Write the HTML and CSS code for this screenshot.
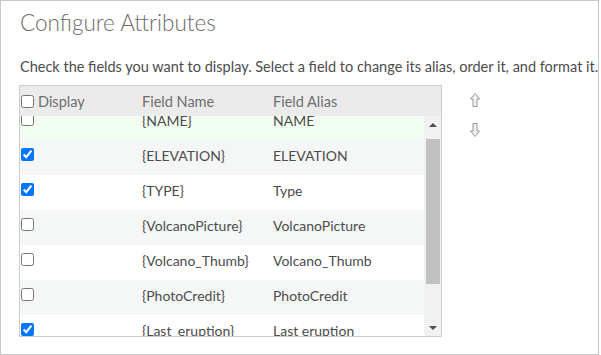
FILE: index.html
```html
<!DOCTYPE html>
<html lang="en">
<head>
    <meta charset="UTF-8">
    <title>Configure Attributes</title>
    <link rel="stylesheet" href="styles.css">
</head>
<body>
    <div class="panel">
        <h1 class="title">Configure Attributes</h1>
        <p class="hint">Check the fields you want to display. Select a field to change its alias, order it, and format it.</p>

        <div class="editor">
            <!-- field grid -->
            <div class="grid">
                <div class="grid-head">
                    <div class="cell cell-check"><input type="checkbox"><span>Display</span></div>
                    <div class="cell">Field Name</div>
                    <div class="cell">Field Alias</div>
                </div>
                <div class="grid-body">
                    <div class="viewport">
                        <div class="rows">
                            <div class="row selected">
                                <div class="cell cell-check"><input type="checkbox"></div>
                                <div class="cell">{NAME}</div>
                                <div class="cell">NAME</div>
                            </div>
                            <div class="row odd">
                                <div class="cell cell-check"><input type="checkbox" checked></div>
                                <div class="cell">{ELEVATION}</div>
                                <div class="cell">ELEVATION</div>
                            </div>
                            <div class="row">
                                <div class="cell cell-check"><input type="checkbox" checked></div>
                                <div class="cell">{TYPE}</div>
                                <div class="cell">Type</div>
                            </div>
                            <div class="row odd">
                                <div class="cell cell-check"><input type="checkbox"></div>
                                <div class="cell">{VolcanoPicture}</div>
                                <div class="cell">VolcanoPicture</div>
                            </div>
                            <div class="row">
                                <div class="cell cell-check"><input type="checkbox"></div>
                                <div class="cell">{Volcano_Thumb}</div>
                                <div class="cell">Volcano_Thumb</div>
                            </div>
                            <div class="row odd">
                                <div class="cell cell-check"><input type="checkbox"></div>
                                <div class="cell">{PhotoCredit}</div>
                                <div class="cell">PhotoCredit</div>
                            </div>
                            <div class="row">
                                <div class="cell cell-check"><input type="checkbox" checked></div>
                                <div class="cell">{Last_eruption}</div>
                                <div class="cell">Last eruption</div>
                            </div>
                        </div>
                    </div>
                    <!-- scrollbar -->
                    <div class="scrollbar">
                        <div class="scroll-btn"><span class="tri tri-up"></span></div>
                        <div class="scroll-track"><div class="scroll-thumb"></div></div>
                        <div class="scroll-btn"><span class="tri tri-down"></span></div>
                    </div>
                </div>
            </div>

            <!-- move up / down -->
            <div class="order-tools">
                <svg class="order-btn" width="10" height="14" viewBox="0 0 10 14"><path d="M5 0.5 L9.5 6 H7 V13.5 H3 V6 H0.5 Z" fill="#f2f2f2" stroke="#959595" stroke-width="1"/></svg>
                <svg class="order-btn" width="10" height="14" viewBox="0 0 10 14"><path d="M5 13.5 L9.5 8 H7 V0.5 H3 V8 H0.5 Z" fill="#f2f2f2" stroke="#959595" stroke-width="1"/></svg>
            </div>
        </div>
    </div>
</body>
</html>
```

FILE: styles.css
```css
/* page */
body {
    margin: 0;
    font-family: Lato, "Open Sans", sans-serif;
    background-color: #fff;
}

.panel {
    width: 599px;
    height: 355px;
    box-sizing: border-box;
    border: 1px solid #c8c8c8;
    padding: 7px 0 0 18px;
    overflow: hidden;
}

.title {
    margin: 0 0 20px 1px;
    font-size: 22.5px;
    line-height: 30px;
    font-weight: 300;
    color: #6b6b6b;
}

.hint {
    margin: 0 0 9px 1px;
    font-size: 14.5px;
    line-height: 18px;
    color: #4c4c4c;
    white-space: nowrap;
}

.editor {
    display: flex;
    align-items: flex-start;
}

/* grid */
.grid {
    width: 423px;
    box-sizing: border-box;
    border: 1px solid #cccccc;
}

.grid-head,
.row {
    display: grid;
    grid-template-columns: 122px 131px 1fr;
}

.grid-head {
    height: 30px;
    align-items: center;
    background-color: #ebebeb;
    color: #6e6e6e;
    font-size: 14.5px;
}

.cell {
    white-space: nowrap;
}

.cell-check {
    display: flex;
    align-items: center;
    padding-left: 1px;
}

.cell-check input {
    margin: 0 4px 0 0;
    width: 13px;
    height: 13px;
}

.grid-body {
    display: flex;
    height: 220px;
}

.viewport {
    flex: 1;
    overflow: hidden;
}

.rows {
    margin-top: -11px;
}

.row {
    height: 35px;
    box-sizing: border-box;
    padding-top: 7px;
    align-items: start;
    font-size: 14px;
    line-height: 18px;
    color: #4c4c4c;
}

.row .cell-check {
    align-items: flex-start;
    padding-top: 1px;
}

.row.odd {
    background-color: #f5f7f7;
}

.row.selected {
    background-color: #f2fdf2;
}

/* scrollbar */
.scrollbar {
    width: 17px;
    display: flex;
    flex-direction: column;
    background-color: #f1f1f1;
}

.scroll-btn {
    height: 17px;
    display: flex;
    align-items: center;
    justify-content: center;
}

.scroll-track {
    flex: 1;
    padding-top: 6px;
}

.scroll-thumb {
    height: 145px;
    margin: 0 1px 0 2px;
    background-color: #c1c1c1;
}

.tri {
    width: 0;
    height: 0;
    border-left: 4px solid transparent;
    border-right: 4px solid transparent;
}

.tri-up {
    border-bottom: 4px solid #505050;
}

.tri-down {
    border-top: 4px solid #505050;
}

/* order buttons */
.order-tools {
    display: flex;
    flex-direction: column;
    gap: 16px;
    padding: 8px 0 0 28px;
}

.order-btn {
    display: block;
}
```
